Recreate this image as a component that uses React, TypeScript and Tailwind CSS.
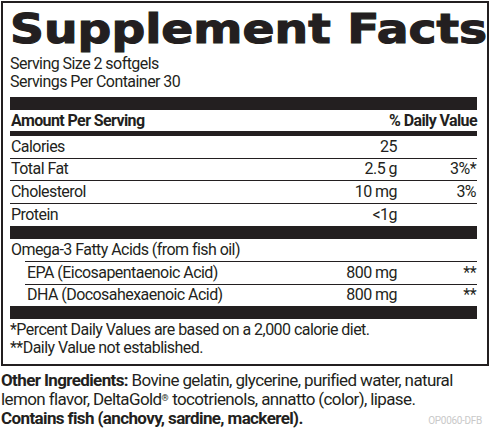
import React from "react";

const rows = [
  { name: "Calories", amount: "25", dv: "" },
  { name: "Total Fat", amount: "2.5 g", dv: "3%*" },
  { name: "Cholesterol", amount: "10 mg", dv: "3%" },
  { name: "Protein", amount: "<1g", dv: "" },
];

const omega = [
  { name: "EPA (Eicosapentaenoic Acid)", amount: "800 mg", dv: "**" },
  { name: "DHA (Docosahexaenoic Acid)", amount: "800 mg", dv: "**" },
];

export default function App() {
  return (
    <div className="w-[490px] h-[432px] bg-white text-[#231f20] overflow-hidden font-['Roboto',sans-serif] tracking-[-0.55px]">
      {/* Facts panel */}
      <div className="ml-[1px] mt-[1px] w-[488px] border-2 border-[#231f20] pl-[7px] pr-[10px] pb-[8px]">
        <h1 className="font-['DejaVu_Sans',sans-serif] font-bold text-[40px] leading-[40px] pt-[6px] mb-[6px] tracking-[0px] whitespace-nowrap origin-left scale-x-[1.18] [-webkit-text-stroke:1.1px_#231f20]">
          Supplement Facts
        </h1>
        <div className="text-[16px] leading-[18px]">
          <p>Serving Size 2 softgels</p>
          <p>Servings Per Container 30</p>
        </div>
        <div className="mt-[6px] h-[13px] bg-[#231f20]" />
        <div className="flex items-center justify-between h-[21px] font-bold text-[16px] tracking-[-0.6px] pl-[1px]">
          <span>Amount Per Serving</span>
          <span>% Daily Value</span>
        </div>
        <div className="h-[5px] bg-[#231f20]" />
        {rows.map((r, i) => (
          <div
            key={r.name}
            className={`flex items-center h-[22.5px] text-[16px] ${i < rows.length - 1 ? "border-b border-[#231f20]" : ""}`}
          >
            <span className="flex-1 pl-[1px]">{r.name}</span>
            <span className="text-right">{r.amount}</span>
            <span className="w-[80px] pr-[1px] text-right">{r.dv}</span>
          </div>
        ))}
        <div className="h-[13px] bg-[#231f20]" />
        <div className="flex items-center h-[22px] text-[16px] pl-[1px]">
          Omega-3 Fatty Acids (from fish oil)
        </div>
        <div className="ml-[15px]">
          {omega.map((r) => (
            <div key={r.name} className="flex items-center h-[22.5px] text-[16px] border-t border-[#231f20]">
              <span className="flex-1 pl-[2px]">{r.name}</span>
              <span className="text-right">{r.amount}</span>
              <span className="w-[80px] pr-[1px] text-right">{r.dv}</span>
            </div>
          ))}
        </div>
        <div className="h-[13px] bg-[#231f20]" />
        <div className="text-[16px] leading-[17.5px] pt-[2px]">
          <p>*Percent Daily Values are based on a 2,000 calorie diet.</p>
          <p>**Daily Value not established.</p>
        </div>
      </div>

      {/* Ingredients */}
      <div className="pl-[1px] pr-[8px] pt-[5px] text-[17px] leading-[19px] tracking-[-0.62px]">
        <p>
          <span className="font-bold">Other Ingredients:</span> Bovine gelatin, glycerine, purified water, natural
        </p>
        <p>
          lemon flavor, DeltaGold<sup className="text-[9px] tracking-normal">®</sup> tocotrienols, annatto (color), lipase.
        </p>
        <div className="flex items-end justify-between">
          <span className="font-bold">Contains fish (anchovy, sardine, mackerel).</span>
          <span className="text-[10px] leading-[14px] tracking-[-0.3px] text-[#c9c9c9]">OP0060-DFB</span>
        </div>
      </div>
    </div>
  );
}
